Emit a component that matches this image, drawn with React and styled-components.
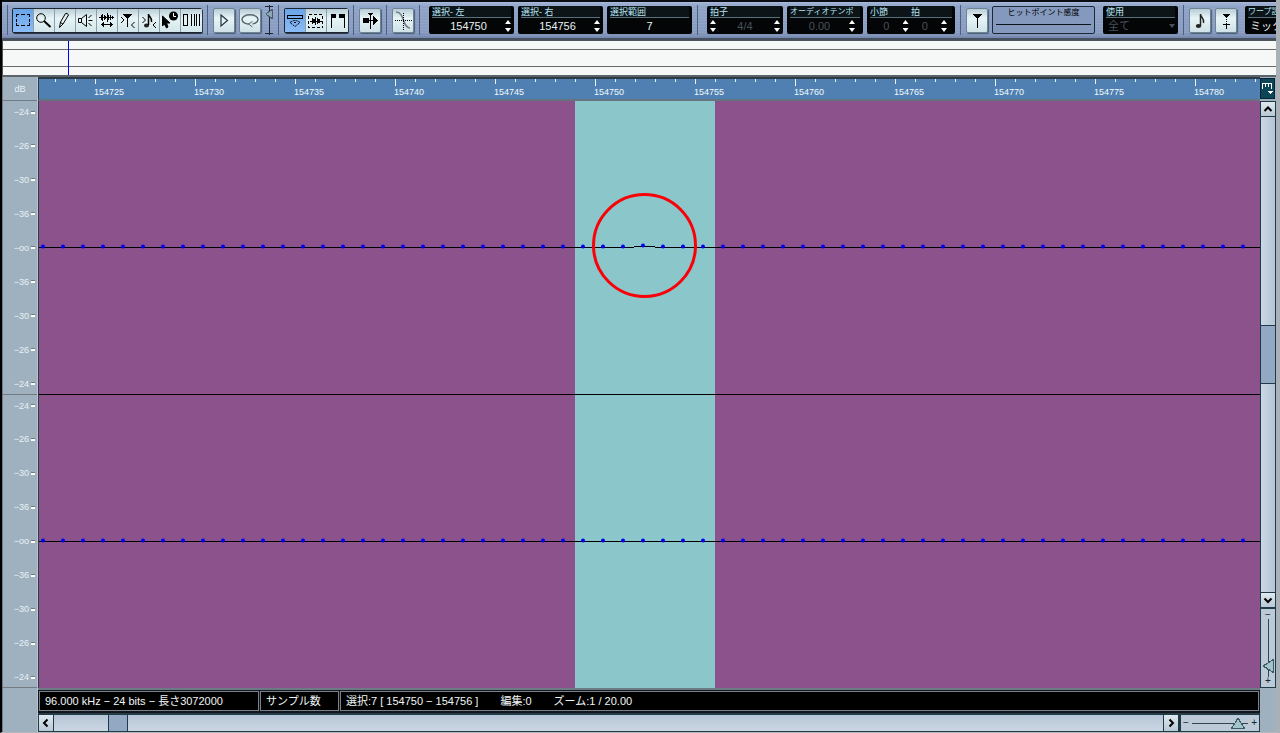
import React from "react";
import styled, { createGlobalStyle } from "styled-components";

const GlobalStyle = createGlobalStyle`
  * {
    box-sizing: border-box;
  }
  body {
    margin: 0;
    background-color: #000;
    font-family: "Liberation Sans", "Noto Sans CJK JP", sans-serif;
    font-size: 11px;
  }
  button, input, select {
    margin: 0;
    padding: 0;
    border: none;
    border-radius: 0;
    font: inherit;
    color: inherit;
    background: none;
  }
  svg {
    display: block;
  }
`;

const Window = styled.div`
  display: flex;
  flex-direction: column;
  min-height: 100vh;
  border-left: 2px solid #000;
  border-right: 4px solid #a9b0b6;
  border-bottom: 1px solid #b4b8bc;
  background-color: #9fb0bf;
  overflow: hidden;
`;

/* ---------- toolbar ---------- */

const ToolbarBox = styled.header`
  display: flex;
  align-items: center;
  gap: 4px;
  height: 40px;
  padding: 0 0 0 5px;
  border-top: 2px solid #0a0d14;
  border-bottom: 2px solid #46505e;
  background: repeating-linear-gradient(
      rgba(255, 255, 255, 0.06) 0 1px,
      transparent 1px 3px
    ),
    linear-gradient(#a6b7d8 0, #90a4c8 4px, #889cc2 30px, #7488ae 36px);
  overflow: hidden;
  > * {
    flex-shrink: 0;
  }
`;

const Divider = styled.span`
  width: 1px;
  height: 30px;
  margin: ${(props) => (props.$first ? "0" : "0 1px")};
  background-color: #4f607e;
`;

const ToolGroup = styled.div`
  display: flex;
  height: 25px;
  padding: 1px 0 1px 1px;
  border-radius: 2px;
  background-color: #1d2630;
  box-shadow: 1px 1px 0 #2c3848;
`;

const ToolButton = styled.button`
  width: 21px;
  height: 23px;
  border-right: 1px solid #8ba0ac;
  background: ${(props) =>
    props.$active
      ? "linear-gradient(#68a4ea, #8cbcf6)"
      : "linear-gradient(#b9cdd6, #e6f4f6 40%, #d3e6ea)"};
  color: #000;
  &:last-child {
    border-right: none;
  }
`;

const SingleButton = styled.button`
  width: 22px;
  height: 25px;
  border: 1px solid #6f8492;
  border-radius: 2px;
  background: linear-gradient(#b9cdd6, #e6f4f6 40%, #cfe2e7);
  box-shadow: 1px 1px 1px #4c5c78;
  color: #000;
`;

const VolumeRange = styled.input`
  appearance: none;
  writing-mode: vertical-lr;
  width: 8px;
  height: 30px;
  background: linear-gradient(#1c2430, #1c2430) 4px 0 / 1px 100% no-repeat,
    linear-gradient(#1c2430, #1c2430) 0 1px / 8px 1px no-repeat,
    linear-gradient(#1c2430, #1c2430) 0 28px / 8px 1px no-repeat;
  &::-webkit-slider-thumb {
    appearance: none;
    width: 8px;
    height: 10px;
    border-right: 1px solid #4a5f6c;
    background: linear-gradient(
          to bottom right,
          transparent 50%,
          #4a5f6c 50% 62%,
          #8fa8b4 62%
        )
        top / 100% 50% no-repeat,
      linear-gradient(
          to top right,
          transparent 50%,
          #4a5f6c 50% 62%,
          #8fa8b4 62%
        )
        bottom / 100% 50% no-repeat;
  }
`;

const DisplayGroup = styled.div`
  display: flex;
  gap: 4px;
  margin-left: 4px;
`;

const Display = styled.div`
  display: flex;
  flex-direction: column;
  width: ${(props) => props.$width}px;
  height: 28px;
  padding: 0 3px;
  border-radius: 2px;
  background-color: #030506;
  color: #e4f0f4;
  overflow: hidden;
`;

const DisplayTitle = styled.div`
  display: flex;
  height: 12px;
  border-bottom: 1px solid #56707c;
  background-color: #0c1418;
  font-size: ${(props) => (props.$dense ? 8 : 9)}px;
  line-height: 12px;
  color: #b5e2f0;
  white-space: nowrap;
  label {
    flex: 1;
  }
`;

const DisplayBody = styled.div`
  display: flex;
  flex: 1;
  align-items: center;
  padding-right: ${(props) => (props.$inset ? 5 : 0)}px;
`;

const ValueInput = styled.input`
  flex: 1;
  min-width: 0;
  width: 10px;
  height: 14px;
  outline: none;
  text-align: center;
  color: ${(props) => (props.disabled ? "#48525a" : "#e8f2f4")};
`;

const SpinBox = styled.div`
  display: flex;
  flex-direction: column;
  gap: 4px;
  width: 6px;
  button {
    display: block;
    width: 6px;
    height: 4px;
    background-color: #fff;
  }
  button:first-child {
    clip-path: polygon(50% 0, 100% 100%, 0 100%);
  }
  button:last-child {
    clip-path: polygon(0 0, 100% 0, 50% 100%);
  }
`;

const ValueSelect = styled.select`
  appearance: none;
  flex: 1;
  height: 15px;
  padding-left: 2px;
  opacity: 1;
  outline: none;
  white-space: nowrap;
  color: ${(props) => (props.disabled ? "#48525a" : "#e8f2f4")};
`;

const DropMark = styled.span`
  width: 6px;
  height: 4px;
  background-color: #48525a;
  clip-path: polygon(0 0, 100% 0, 50% 100%);
`;

const SensitivityBox = styled.div`
  display: flex;
  flex-direction: column;
  width: 103px;
  height: 28px;
  padding: 0 3px;
  border: 1px solid #1d2838;
  border-radius: 2px;
  background-color: #8499bd;
  font-size: 8px;
  line-height: 12px;
  text-align: center;
  color: #000;
  input {
    appearance: none;
    width: 100%;
    height: 14px;
    background: linear-gradient(#0e141c, #0e141c) 0 5px / 100% 1px no-repeat;
  }
  input::-webkit-slider-thumb {
    appearance: none;
    width: 0;
    height: 0;
  }
`;

/* ---------- overview ---------- */

const Overview = styled.div`
  display: flex;
  flex-direction: column;
  height: 37px;
  padding: 0 0 0 1px;
  border-bottom: 2px solid #5b6269;
  background-color: #4c545c;
`;

const OverviewLane = styled.div`
  position: relative;
  flex: 1;
  display: flex;
  flex-direction: column;
  gap: 1px;
  background-color: #6a6a6a;
  border-top: 1px solid #4c545c;
  span {
    background-color: #f6f8f8;
    height: 8px;
  }
  span:nth-child(2) {
    height: auto;
    flex: 1;
  }
`;

const OverviewCursor = styled.i`
  position: absolute;
  left: 65px;
  top: 0;
  bottom: 0;
  width: 1px;
  background-color: #0000f0;
`;

/* ---------- editor ---------- */

const Editor = styled.main`
  display: flex;
  flex: 1;
`;

const ScaleColumn = styled.div`
  display: flex;
  flex-direction: column;
  width: 36px;
  border-left: 1px solid #6f7b86;
  border-right: 1px solid #b9c5ce;
  color: #e8f2f6;
  font-size: 9px;
`;

const ScaleHead = styled.div`
  height: 24px;
  border-bottom: 1px solid #6f7b86;
  line-height: 24px;
  text-align: center;
`;

const Scale = styled.div`
  display: flex;
  flex: 1;
  flex-direction: column;
  justify-content: space-between;
  padding: 5px 2px 4px 0;
  border-bottom: 1px solid #747b80;
`;

const ScaleMark = styled.div`
  display: flex;
  align-items: center;
  justify-content: flex-end;
  gap: 2px;
  height: 12px;
  line-height: 12px;
  &::after {
    content: "";
    width: 4px;
    height: 2px;
    border-top: 1px solid #6f7b80;
    background-color: #fff;
  }
`;

const CornerFoot = styled.div`
  height: 44px;
`;

const Center = styled.div`
  display: flex;
  flex: 1;
  flex-direction: column;
  min-width: 0;
`;

const Ruler = styled.div`
  display: flex;
  align-items: flex-end;
  height: 24px;
  padding: 0 0 1px 55px;
  border: 1px solid #2c3a46;
  border-width: 2px 0 2px 1px;
  border-bottom-color: #65757f;
  background: linear-gradient(to right, #e8f4fa 1px, transparent 1px) 16px 0 /
      20px 3px repeat-x,
    linear-gradient(to right, #e8f4fa 1px, transparent 1px) 56px 0 / 100px 5px
      repeat-x,
    linear-gradient(to right, #fff 1px, transparent 1px) 156px 0 / 200px 7px
      repeat-x,
    #4f80b1;
  overflow: hidden;
  span {
    flex: 0 0 100px;
    font-size: 9px;
    line-height: 11px;
    color: #f4fafc;
  }
`;

const Wave = styled.div`
  display: flex;
  flex: 1;
  flex-direction: column;
  border-left: 1px solid #2c3a46;
  background-color: #8c528b;
`;

const Channel = styled.div`
  position: relative;
  flex: 1;
  overflow: hidden;
  border-bottom: ${(props) => (props.$last ? "none" : "1px solid #000")};
  > svg {
    position: absolute;
    width: 100%;
    height: 100%;
  }
`;

const Marker = styled.i`
  position: absolute;
  left: 553px;
  top: calc(50% - 55px);
  width: 105px;
  height: 105px;
  border: 3px solid #fb0007;
  border-radius: 50%;
`;

const StatusBar = styled.footer`
  display: flex;
  gap: 1px;
  height: 26px;
  padding: 1px 1px 2px;
  border-top: 2px solid #6c7a86;
  border-bottom: 1px solid #2c3a46;
  background-color: #10181e;
`;

const StatusCell = styled.div`
  display: flex;
  gap: 22px;
  width: ${(props) => (props.$width ? `${props.$width}px` : "auto")};
  flex: ${(props) => (props.$width ? "none" : "1")};
  padding: 0 5px;
  border: 1px solid #7a7f8a;
  background-color: #000;
  line-height: 19px;
  color: #f2f6f6;
  white-space: pre;
`;

const SideColumn = styled.div`
  display: flex;
  flex-direction: column;
  width: 16px;
`;

const RulerButton = styled.button`
  height: 21px;
  margin: 1px 1px 2px 0;
  border: 1px solid #0b2230;
  background-color: #0b4558;
  color: #fff;
`;

const ScrollBar = styled.div`
  display: flex;
  flex: 1;
  flex-direction: ${(props) => (props.$vertical ? "column" : "row")};
  border: 1px solid #1f3a48;
  background: ${(props) =>
    props.$vertical
      ? "linear-gradient(to right, #cbd8e4, #b4c4d4)"
      : "linear-gradient(#b6c6d6, #cbd6e2)"};
`;

const ScrollArrow = styled.button`
  flex: none;
  width: 14px;
  height: ${(props) => (props.$tall ? 16 : 14)}px;
  background: linear-gradient(#dfe9ef, #b8c8d4);
  outline: 1px solid #1f3a48;
  color: #000;
`;

const ScrollSpace = styled.span`
  flex: ${(props) => props.$grow};
`;

const ScrollThumb = styled.span`
  flex: none;
  align-self: stretch;
  ${(props) =>
    props.$vertical
      ? "height: 59px; border-width: 1px 0;"
      : "width: 20px; border-width: 0 1px;"};
  border-style: solid;
  border-color: #1f3a48;
  background-color: #93a9c3;
`;

const BottomRow = styled.div`
  display: flex;
  gap: 1px;
  height: 18px;
  background-color: #1f3a48;
`;

const ZoomBox = styled.div`
  display: flex;
  flex: none;
  flex-direction: ${(props) => (props.$vertical ? "column" : "row")};
  align-items: center;
  justify-content: space-between;
  ${(props) => (props.$vertical ? "height: 80px" : "width: 80px")};
  padding: ${(props) => (props.$vertical ? "2px 0" : "0 2px")};
  border: 1px solid #1f3a48;
  background-color: #bccad8;
  font-size: 10px;
  line-height: 8px;
  color: #10252f;
  input {
    appearance: none;
    ${(props) =>
      props.$vertical
        ? "writing-mode: vertical-lr; width: 13px; height: 58px;"
        : "width: 56px; height: 13px;"};
    background: linear-gradient(#31454f, #31454f) center /
      ${(props) => (props.$vertical ? "1px 100%" : "100% 1px")} no-repeat;
  }
  input::-webkit-slider-thumb {
    appearance: none;
    width: ${(props) => (props.$vertical ? 12 : 14)}px;
    height: ${(props) => (props.$vertical ? 14 : 12)}px;
    ${(props) => (props.$vertical ? "" : "border-bottom: 1px solid #3d5c66;")}
    ${(props) => (props.$vertical ? "border-right: 1px solid #3d5c66;" : "")}
    background: linear-gradient(
          to bottom right,
          transparent 50%,
          #3d5c66 50% 60%,
          #a3c4c8 60%
        )
        ${(props) => (props.$vertical ? "top / 100% 50%" : "left / 50% 100%")}
        no-repeat,
      linear-gradient(
          ${(props) => (props.$vertical ? "to top right" : "to bottom left")},
          transparent 50%,
          #3d5c66 50% 60%,
          #a3c4c8 60%
        )
        ${(props) => (props.$vertical ? "bottom / 100% 50%" : "right / 50% 100%")}
        no-repeat;
  }
`;

const icons = {
  select: <path d="M3.5 8V5.5H6M8 5.5h4M14 5.5h2.500V8M16.500 10v3M16.500 14v2.500H14M12 16.500H8M6 16.500H3.500V14M3.500 13v-3" />,
  zoom: (
    <g shapeRendering="auto">
      <circle cx="7" cy="9" r="4.300" />
      <path d="M10 12l6.500 6" strokeWidth="2" />
    </g>
  ),
  pencil: (
    <path
      shapeRendering="auto"
      d="M4.500 18.500l1-5.500 5-8.500q2-1 3 1.500l-5.500 9zM5.500 13.500l2.500 1.500"
    />
  ),
  speaker: <path shapeRendering="auto" d="M2.500 9.500h3v4h-3zM5.500 9.500l5-4v12l-5-4M12.500 9l3-3M12.500 11.500h4M12.500 14l3 3" />,
  scrub: (
    <g>
      <path d="M2 8.500h15M4.500 6v5M5.500 5v7M7.500 6v5M8.500 7v3M10.500 4v9M11.500 6v5M13.500 6v5M15.500 7v3" />
      <path d="M4 15.500h12M6.500 13v5M13.500 13v5M5.500 14v3M14.500 14v3" />
    </g>
  ),
  hitpoint: (
    <g>
      <path d="M5.500 5.500h8l-3 3h-2z" fill="currentColor" />
      <path d="M9.500 6v12" />
      <path shapeRendering="auto" d="M3 8l3 3-3 3M16.500 13l-3 3 3 3" />
    </g>
  ),
  noteEdit: (
    <g shapeRendering="auto">
      <path d="M3.500 8l3 3-3 3M17 13l-3 3 3 3" />
      <ellipse cx="7.500" cy="16.500" rx="2.500" ry="2" fill="#222" stroke="none" />
      <path d="M9.500 16V5c0 3 4 3 3 8" strokeWidth="1.500" />
    </g>
  ),
  timeWarp: (
    <g shapeRendering="auto">
      <path d="M2.500 7v10l2-2 2 4 1.500-1-1.500-4h3.500z" fill="currentColor" />
      <circle cx="13.500" cy="7" r="4.500" fill="currentColor" stroke="none" />
      <path d="M13.500 4v3.500H16" stroke="#fff" />
    </g>
  ),
  bars: <path d="M2.500 5.500v11M2 5.500h4M2 16.500h4M6.500 5v12M10.500 5v12M13.500 5v12M15.500 5v12M18.500 5v12" />,
  showInfo: (
    <g>
      <path d="M2.500 6.500h15v3h-15z" />
      <path shapeRendering="auto" d="M5 13.500q5-4 10 0l-5 4zM9 13.500h2" strokeDasharray="2 1" />
    </g>
  ),
  waveSelect: (
    <g>
      <path d="M2.500 5.500h14v13h-14z" strokeDasharray="3 2" />
      <path d="M4 12h12M6.500 9v6M7.500 10v4M8.500 10v4M9.500 8v8M11.500 9v6M12.500 10v4M13.500 10v4" />
    </g>
  ),
  flags: (
    <g>
      <path d="M4.500 5.500h4v3h-4zM12.500 5.500h5v3h-5z" fill="currentColor" />
      <path d="M4.500 5v14M17.500 5v14" />
    </g>
  ),
  autoScroll: (
    <g>
      <path d="M3.500 9.500h5v4h-5z" fill="currentColor" />
      <path d="M13 7l5.500 4.500-5.500 4.500z" fill="currentColor" stroke="none" />
      <path d="M10.500 4v16M8 4.500h5M9 5.500h3M8 11.500h6" />
    </g>
  ),
  zeroCross: (
    <g>
      <path shapeRendering="auto" d="M3 3c9 0 6 16 14 16" stroke="#707b82" strokeWidth="1.500" />
      <path d="M2 11.500h17M10.500 4v17" strokeDasharray="1 1" />
    </g>
  ),
  play: (
    <path
      shapeRendering="auto"
      d="M7 6l6.500 5.500L7 17z"
      stroke="#24343f"
      strokeWidth="1.200"
    />
  ),
  loop: (
    <g shapeRendering="auto" stroke="#5a676f">
      <ellipse cx="10" cy="10.500" rx="8" ry="4.700" strokeWidth="1.500" />
      <path d="M12.500 12.500l-4 2.500 4 3" fill="#dcebf0" />
    </g>
  ),
  hitFlag: (
    <g>
      <path d="M6.500 5.500h8l-3 3h-2z" fill="currentColor" />
      <path d="M10.500 7v12" />
    </g>
  ),
  note: (
    <g shapeRendering="auto">
      <ellipse cx="8.500" cy="17" rx="2.700" ry="2" fill="#222" stroke="none" />
      <path d="M10.500 17V5c0 4 4.500 4 3 9" strokeWidth="1.500" stroke="#222" />
    </g>
  ),
  warp: (
    <g>
      <path d="M7.500 5.500h6l-3 3z" fill="currentColor" />
      <path d="M10.500 10v1M10.500 12v1M7 15.500h7M10.500 14v6" />
    </g>
  ),
};

const Icon = ({ name }) => (
  <svg
    width="20"
    height="23"
    viewBox="0 0 20 23"
    fill="none"
    stroke="currentColor"
    shapeRendering="crispEdges"
    aria-hidden="true"
  >
    {icons[name]}
  </svg>
);

const arrows = {
  up: "M3.500 9l3.500-3.500L10.500 9",
  down: "M3.500 5.500L7 9l3.500-3.500",
  left: "M8.500 3.500L5 7l3.500 3.500",
  right: "M5.500 3.500L9 7l-3.500 3.500",
};

const Arrow = ({ dir }) => (
  <ScrollArrow aria-label={dir} $tall={dir === "left" || dir === "right"}>
    <svg width="14" height="14" fill="none" stroke="#000" strokeWidth="2">
      <path d={arrows[dir]} />
    </svg>
  </ScrollArrow>
);

const Spin = ({ label }) => (
  <SpinBox>
    <button aria-label={`${label} +`} />
    <button aria-label={`${label} -`} />
  </SpinBox>
);

const Field = ({ id, title, value, width, dense, disabled, left, noSpin }) => (
  <Display $width={width}>
    <DisplayTitle $dense={dense}>
      <label htmlFor={id}>{title}</label>
    </DisplayTitle>
    <DisplayBody $inset={dense}>
      {left && <Spin label={title} />}
      <ValueInput id={id} defaultValue={value} disabled={disabled} />
      {!noSpin && <Spin label={title} />}
    </DisplayBody>
  </Display>
);

const tools = [
  "select",
  "zoom",
  "pencil",
  "speaker",
  "scrub",
  "hitpoint",
  "noteEdit",
  "timeWarp",
  "bars",
];
const views = ["showInfo", "waveSelect", "flags"];

const Toolbar = () => (
  <ToolbarBox>
    <Divider $first />
    <ToolGroup>
      {tools.map((name, index) => (
        <ToolButton key={name} $active={index === 0} aria-label={name}>
          <Icon name={name} />
        </ToolButton>
      ))}
    </ToolGroup>
    <Divider />
    <SingleButton aria-label="play">
      <Icon name="play" />
    </SingleButton>
    <SingleButton aria-label="loop">
      <Icon name="loop" />
    </SingleButton>
    <VolumeRange type="range" defaultValue="20" aria-label="volume" />
    <Divider />
    <ToolGroup>
      {views.map((name, index) => (
        <ToolButton key={name} $active={index === 0} aria-label={name}>
          <Icon name={name} />
        </ToolButton>
      ))}
    </ToolGroup>
    <Divider />
    <SingleButton aria-label="auto scroll">
      <Icon name="autoScroll" />
    </SingleButton>
    <Divider />
    <SingleButton aria-label="zero crossing">
      <Icon name="zeroCross" />
    </SingleButton>
    <Divider />
    <DisplayGroup>
      <Field id="selStart" title="選択- 左" value="154750" width={85} />
      <Field id="selEnd" title="選択- 右" value="154756" width={85} />
      <Field id="selRange" title="選択範囲" value="7" width={85} noSpin />
    </DisplayGroup>
    <Divider />
    <DisplayGroup>
      <Field id="signature" title="拍子" value="4/4" width={76} disabled left />
      <Field id="tempo" title="オーディオテンポ" value="0.00" width={76} dense disabled />
      <Display $width={88}>
        <DisplayTitle>
          <label htmlFor="bar">小節</label>
          <label htmlFor="beat">拍</label>
        </DisplayTitle>
        <DisplayBody $inset>
          <ValueInput id="bar" defaultValue="0" disabled />
          <Spin label="小節" />
          <ValueInput id="beat" defaultValue="0" disabled />
          <Spin label="拍" />
        </DisplayBody>
      </Display>
    </DisplayGroup>
    <Divider />
    <SingleButton aria-label="hitpoint mode">
      <Icon name="hitFlag" />
    </SingleButton>
    <SensitivityBox>
      <label htmlFor="sensitivity">ヒットポイント感度</label>
      <input id="sensitivity" type="range" disabled />
    </SensitivityBox>
    <DisplayGroup>
      <Display $width={75}>
        <DisplayTitle>
          <label htmlFor="use">使用</label>
        </DisplayTitle>
        <DisplayBody>
          <ValueSelect id="use" disabled>
            <option>全て</option>
          </ValueSelect>
          <DropMark />
        </DisplayBody>
      </Display>
    </DisplayGroup>
    <Divider />
    <SingleButton aria-label="musical mode">
      <Icon name="note" />
    </SingleButton>
    <SingleButton aria-label="warp tab">
      <Icon name="warp" />
    </SingleButton>
    <DisplayGroup>
      <Display $width={85}>
        <DisplayTitle $dense>
          <label htmlFor="warpSetting">ワープ設定</label>
        </DisplayTitle>
        <DisplayBody>
          <ValueSelect id="warpSetting">
            <option>ミックス</option>
          </ValueSelect>
        </DisplayBody>
      </Display>
    </DisplayGroup>
  </ToolbarBox>
);

const levels = ["−24", "−26", "−30", "−36", "−oo", "−36", "−30", "−26", "−24"];

const LevelScale = () => (
  <Scale>
    {levels.map((level, index) => (
      <ScaleMark key={index}>{level}</ScaleMark>
    ))}
  </Scale>
);

// one sample every 20px
const samples = Array.from({ length: 130 }, (_, index) => index * 20 + 4);
const peak = 604;

const ChannelWave = ({ hasPeak, last }) => (
  <Channel $last={last}>
    <svg>
      <rect x="536" width="140" height="100%" fill="#8ac6ca" />
      <svg y="50%" overflow="visible">
        <path d="M0 -0.500H4000" stroke="#000" shapeRendering="crispEdges" />
        {hasPeak && (
          <>
            <path d="M595 -0.500h21" stroke="#8ac6ca" shapeRendering="crispEdges" />
            <path d="M595 -1.500h21" stroke="#000" shapeRendering="crispEdges" />
          </>
        )}
        {samples.map((x) => (
          <circle
            key={x}
            cx={x}
            cy={hasPeak && x === peak ? -2 : -1}
            r="2"
            fill="#0000f4"
          />
        ))}
      </svg>
    </svg>
    {hasPeak && <Marker />}
  </Channel>
);

const rulerLabels = Array.from({ length: 12 }, (_, index) => 154725 + index * 5);

const App = () => {
  return (
    <Window>
      <GlobalStyle />
      <Toolbar />
      <Overview>
        <OverviewLane>
          <span />
          <span />
          <span />
          <OverviewCursor />
        </OverviewLane>
      </Overview>
      <Editor>
        <ScaleColumn>
          <ScaleHead>dB</ScaleHead>
          <LevelScale />
          <LevelScale />
          <CornerFoot />
        </ScaleColumn>
        <Center>
          <Ruler>
            {rulerLabels.map((label) => (
              <span key={label}>{label}</span>
            ))}
          </Ruler>
          <Wave>
            <ChannelWave hasPeak />
            <ChannelWave last />
          </Wave>
          <StatusBar>
            <StatusCell $width={220}>96.000 kHz − 24 bits − 長さ3072000</StatusCell>
            <StatusCell $width={79}>サンプル数</StatusCell>
            <StatusCell>
              <span>選択:7 [ 154750 − 154756 ]</span>
              <span>編集:0</span>
              <span>ズーム:1 / 20.00</span>
            </StatusCell>
          </StatusBar>
          <BottomRow>
            <ScrollBar>
              <Arrow dir="left" />
              <ScrollSpace $grow="1" />
              <ScrollThumb />
              <ScrollSpace $grow="19" />
              <Arrow dir="right" />
            </ScrollBar>
            <ZoomBox>
              −
              <input type="range" defaultValue="94" aria-label="horizontal zoom" />
              +
            </ZoomBox>
          </BottomRow>
        </Center>
        <SideColumn>
          <RulerButton aria-label="ruler format">
            <svg width="13" height="17" fill="none" stroke="#fff" shapeRendering="crispEdges">
              <path d="M1 3.500h10M1.500 3v6M4.500 3v4M7.500 3v4M10.500 3v6" />
              <path d="M6 11h6l-3 3z" fill="#fff" stroke="none" />
            </svg>
          </RulerButton>
          <ScrollBar $vertical>
            <Arrow dir="up" />
            <ScrollSpace $grow="1" />
            <ScrollThumb $vertical />
            <ScrollSpace $grow="1" />
            <Arrow dir="down" />
          </ScrollBar>
          <ZoomBox $vertical>
            −
            <input type="range" defaultValue="92" aria-label="vertical zoom" />
            +
          </ZoomBox>
          <CornerFoot />
        </SideColumn>
      </Editor>
    </Window>
  );
};

export default App;
